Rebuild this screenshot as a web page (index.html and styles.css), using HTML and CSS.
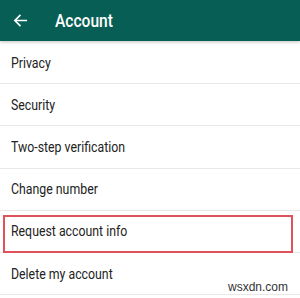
FILE: index.html
```html
<!DOCTYPE html>
<html>
<head>
<meta charset="utf-8">
<link rel="stylesheet" href="styles.css">
</head>
<body>
<div class="screen">
  <header class="appbar">
    <svg class="back" width="15" height="15" viewBox="0 0 16 16"><path d="M15 8H2M8 2L2 8l6 6" fill="none" stroke="#fff" stroke-width="1.8"/></svg>
    <span class="title">Account</span>
  </header>
  <ul class="list">
    <li class="row"><span class="label">Privacy</span></li>
    <li class="row"><span class="label">Security</span></li>
    <li class="row"><span class="label">Two-step verification</span></li>
    <li class="row"><span class="label">Change number</span></li>
    <li class="row"><span class="label">Request account info</span><span class="mark"></span></li>
    <li class="row"><span class="label">Delete my account</span></li>
  </ul>
  <span class="watermark">wsxdn.com</span>
</div>
</body>
</html>
```

FILE: styles.css
```css
html, body { margin: 0; padding: 0; }
body { width: 300px; height: 298px; overflow: hidden; background: #fff; font-family: Roboto, "Noto Sans", sans-serif; }
.screen { position: relative; width: 300px; height: 298px; display: flex; flex-direction: column; }
.appbar {
  height: 41px; flex: none; background: #075e54; display: flex; align-items: center;
  padding-left: 13px; box-shadow: 0 1px 3px rgba(0,0,0,0.25); position: relative; z-index: 1;
}
.back { margin-right: 27px; }
.title { display: inline-block; color: #fff; font-size: 17.5px; font-weight: 500; transform: scaleX(0.89); transform-origin: left center; }
.list { list-style: none; margin: 0; padding: 0; }
.row {
  position: relative; height: 41.2px; box-sizing: content-box; border-bottom: 1.2px solid #e8e8e8;
  display: flex; align-items: center; padding-left: 11px; font-size: 14px; color: #222;
}
.row:first-child { margin-top: 1px; }
.label { display: inline-block; transform: scaleX(0.88); transform-origin: left center; white-space: nowrap; }
.mark { position: absolute; left: 3px; right: 7px; top: 4px; bottom: -1px; border: 2px solid #e0525b; box-sizing: border-box; }
.watermark { position: absolute; right: 12px; bottom: 4px; font-family: "Liberation Sans", Arial, sans-serif; font-size: 12px; color: #333; }
```
